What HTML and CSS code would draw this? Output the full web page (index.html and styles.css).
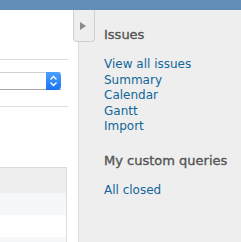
FILE: index.html
```html
<!DOCTYPE html>
<html lang="en">
<head>
    <meta charset="UTF-8">
    <meta name="viewport" content="width=device-width, initial-scale=1.0">
    <title>Issues</title>
    <link rel="stylesheet" href="styles.css">
</head>
<body>
    <div class="header"></div>
    <div class="main">
        <div class="content">
            <div class="rule rule-top"></div>
            <div class="select">
                <span class="select-btn">
                    <svg width="9" height="12" viewBox="0 0 9 12">
                        <path d="M1.5 4.5 L4.5 1.5 L7.5 4.5 M1.5 7.5 L4.5 10.5 L7.5 7.5" fill="none" stroke="#fff" stroke-width="1.4"/>
                    </svg>
                </span>
            </div>
            <div class="rule rule-bottom"></div>
            <table class="list">
                <tr class="head"><td></td></tr>
                <tr class="odd"><td></td></tr>
                <tr class="even"><td></td></tr>
                <tr class="odd"><td></td></tr>
            </table>
        </div>
        <div class="sidebar">
            <a class="toggle" href="#">
                <svg width="6" height="8" viewBox="0 0 6 8"><path d="M0 0 L6 4 L0 8 Z" fill="#8a8a8a"/></svg>
            </a>
            <h3>Issues</h3>
            <ul class="links first">
                <li><a href="#">View all issues</a></li>
                <li><a href="#">Summary</a></li>
                <li><a href="#">Calendar</a></li>
                <li><a href="#">Gantt</a></li>
                <li><a href="#">Import</a></li>
            </ul>
            <h3>My custom queries</h3>
            <ul class="links">
                <li><a href="#">All closed</a></li>
            </ul>
        </div>
    </div>
</body>
</html>
```

FILE: styles.css
```css
body {
    font-family: "DejaVu Sans", Verdana, sans-serif;
    margin: 0;
    background-color: #fff;
    overflow: hidden;
}
.header {
    height: 10px;
    background-color: #628db6;
}
.main {
    display: flex;
    height: 232px;
}
.content {
    flex: 0 0 78px;
    padding-right: 10px;
    box-sizing: border-box;
    overflow: hidden;
}
.rule {
    height: 1px;
    background-color: #dcdcdc;
}
.rule-top {
    margin-top: 49px;
}
.select {
    display: flex;
    justify-content: flex-end;
    height: 18px;
    width: 61px;
    margin-top: 12px;
    box-sizing: border-box;
    border-top: 1px solid #d0d0d0;
    border-bottom: 1px solid #a8a8a8;
    background-color: #fff;
}
.select-btn {
    display: flex;
    align-items: center;
    justify-content: center;
    width: 15px;
    height: 18px;
    margin-top: -1px;
    border-radius: 0 4px 4px 0;
    background: linear-gradient(#4aa0ff, #1a74f0);
}
.rule-bottom {
    margin-top: 16px;
}
.list {
    width: 67px;
    margin-top: 60px;
    border-collapse: collapse;
    border-top: 1px solid #dcdcdc;
    border-right: 1px solid #dcdcdc;
}
.list td {
    padding: 0;
    height: 22px;
}
.list .head td {
    height: 25px;
    background-color: #eeeeee;
}
.list .odd td {
    background-color: #f6f7f9;
}
.list .even td {
    background-color: #fff;
}
.sidebar {
    position: relative;
    flex: 1;
    min-width: 0;
    background-color: #eeeeee;
    border-left: 1px solid #dddddd;
    padding: 17px 0 0 25px;
}
.toggle {
    position: absolute;
    left: -6px;
    top: 0;
    width: 22px;
    height: 32px;
    box-sizing: border-box;
    display: flex;
    align-items: center;
    justify-content: center;
    padding-right: 2px;
    background-color: #eeeeee;
    border: 1px solid #cfcfcf;
    border-top: none;
    border-radius: 0 0 4px 4px;
}
.sidebar h3 {
    margin: 0 0 14px;
    font-size: 13px;
    line-height: 16px;
    font-weight: normal;
    color: #555;
    -webkit-text-stroke: 0.35px #555;
    white-space: nowrap;
}
.links {
    list-style: none;
    margin: 0 0 18px;
    padding: 0;
    font-size: 12px;
    line-height: 15.6px;
}
.links a {
    color: #169;
    text-decoration: none;
    white-space: nowrap;
}
```
